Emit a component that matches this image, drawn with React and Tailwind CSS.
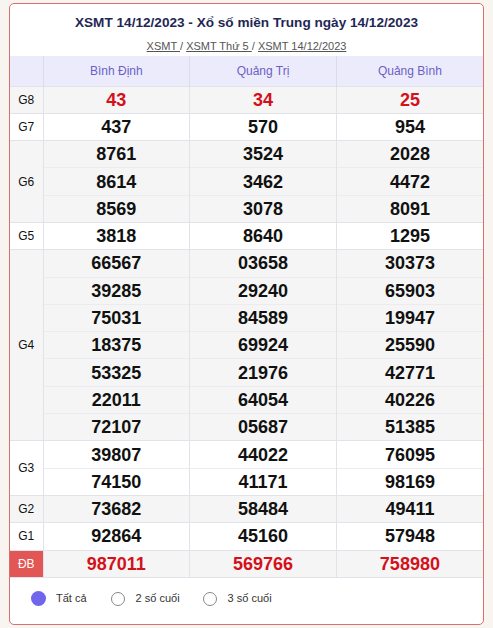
import React from "react";

const cols = ["Bình Định", "Quảng Trị", "Quảng Bình"];
const prizes = [
  { label: "G8", nums: [["43", "34", "25"]], red: true, bg: "bg-[#f5f5f5]" },
  { label: "G7", nums: [["437", "570", "954"]], bg: "bg-white" },
  {
    label: "G6",
    nums: [
      ["8761", "3524", "2028"],
      ["8614", "3462", "4472"],
      ["8569", "3078", "8091"],
    ],
    bg: "bg-[#f5f5f5]",
  },
  { label: "G5", nums: [["3818", "8640", "1295"]], bg: "bg-white" },
  {
    label: "G4",
    nums: [
      ["66567", "03658", "30373"],
      ["39285", "29240", "65903"],
      ["75031", "84589", "19947"],
      ["18375", "69924", "25590"],
      ["53325", "21976", "42771"],
      ["22011", "64054", "40226"],
      ["72107", "05687", "51385"],
    ],
    bg: "bg-[#f5f5f5]",
  },
  {
    label: "G3",
    nums: [
      ["39807", "44022", "76095"],
      ["74150", "41171", "98169"],
    ],
    bg: "bg-white",
  },
  { label: "G2", nums: [["73682", "58484", "49411"]], bg: "bg-[#f5f5f5]" },
  { label: "G1", nums: [["92864", "45160", "57948"]], bg: "bg-white" },
  { label: "ĐB", nums: [["987011", "569766", "758980"]], red: true, db: true, bg: "bg-[#f5f5f5]" },
];

export default function App() {
  return (
    <div
      className="min-h-[628px] w-[493px] bg-[#f8f4ef] pt-[3px] px-[9px]"
      style={{ fontFamily: '"Liberation Sans", Arial, sans-serif' }}
    >
      <div className="w-[475px] h-[622px] bg-white border border-[#d9706e] rounded-[5px] overflow-hidden">
        <h1 className="text-center text-[13.6px] font-bold text-[#1f2755] pt-[10px] leading-[18px]">
          XSMT 14/12/2023 - Xổ số miền Trung ngày 14/12/2023
        </h1>
        <div className="text-center text-[11px] text-[#555] mt-[7px] leading-[14px]">
          <span className="underline">XSMT </span>
          <span> / </span>
          <span className="underline">XSMT Thứ 5 </span>
          <span> / </span>
          <span className="underline">XSMT 14/12/2023</span>
        </div>
        <table className="w-full mt-[3px] border-collapse table-fixed">
          <colgroup>
            <col className="w-[33px]" />
            <col />
            <col />
            <col />
          </colgroup>
          <thead>
            <tr className="h-[30px] bg-[#ecebfb]">
              <th className="border-r border-[#dcdbe8]"></th>
              {cols.map((c, i) => (
                <th
                  key={c}
                  className={`text-[12px] font-normal text-[#6b5fc9] ${i < 2 ? "border-r border-[#dcdbe8]" : ""}`}
                >
                  {c}
                </th>
              ))}
            </tr>
          </thead>
          <tbody>
            {prizes.map((p) =>
              p.nums.map((row, ri) => (
                <tr
                  key={p.label + ri}
                  className={`h-[27.3px] ${p.bg} ${ri === 0 ? "border-t border-[#e2e2ea]" : "border-t border-[#ececf0]"}`}
                >
                  {ri === 0 && (
                    <td
                      rowSpan={p.nums.length}
                      className={`text-center text-[12px] border-r border-[#e2e2ea] ${
                        p.db ? "bg-[#e35656] text-white" : "text-[#111]"
                      }`}
                    >
                      {p.label}
                    </td>
                  )}
                  {row.map((n, ci) => (
                    <td
                      key={ci}
                      className={`text-center font-bold text-[18px] leading-[20px] ${
                        p.red ? "text-[#d4111b]" : "text-[#111]"
                      } ${ci < 2 ? "border-r border-[#e2e2ea]" : ""}`}
                    >
                      {n}
                    </td>
                  ))}
                </tr>
              ))
            )}
            <tr className="h-0 border-t border-[#e2e2ea]"></tr>
          </tbody>
        </table>
        <div className="flex items-center pl-[21px] mt-[13px] text-[11px] text-[#333]">
          <span className="w-[15px] h-[15px] rounded-full bg-[#6f66ec]"></span>
          <span className="ml-[10px]">Tất cả</span>
          <span className="ml-[24px] w-[14px] h-[14px] rounded-full border border-[#888] bg-white"></span>
          <span className="ml-[11px]">2 số cuối</span>
          <span className="ml-[23px] w-[14px] h-[14px] rounded-full border border-[#888] bg-white"></span>
          <span className="ml-[11px]">3 số cuối</span>
        </div>
      </div>
    </div>
  );
}
